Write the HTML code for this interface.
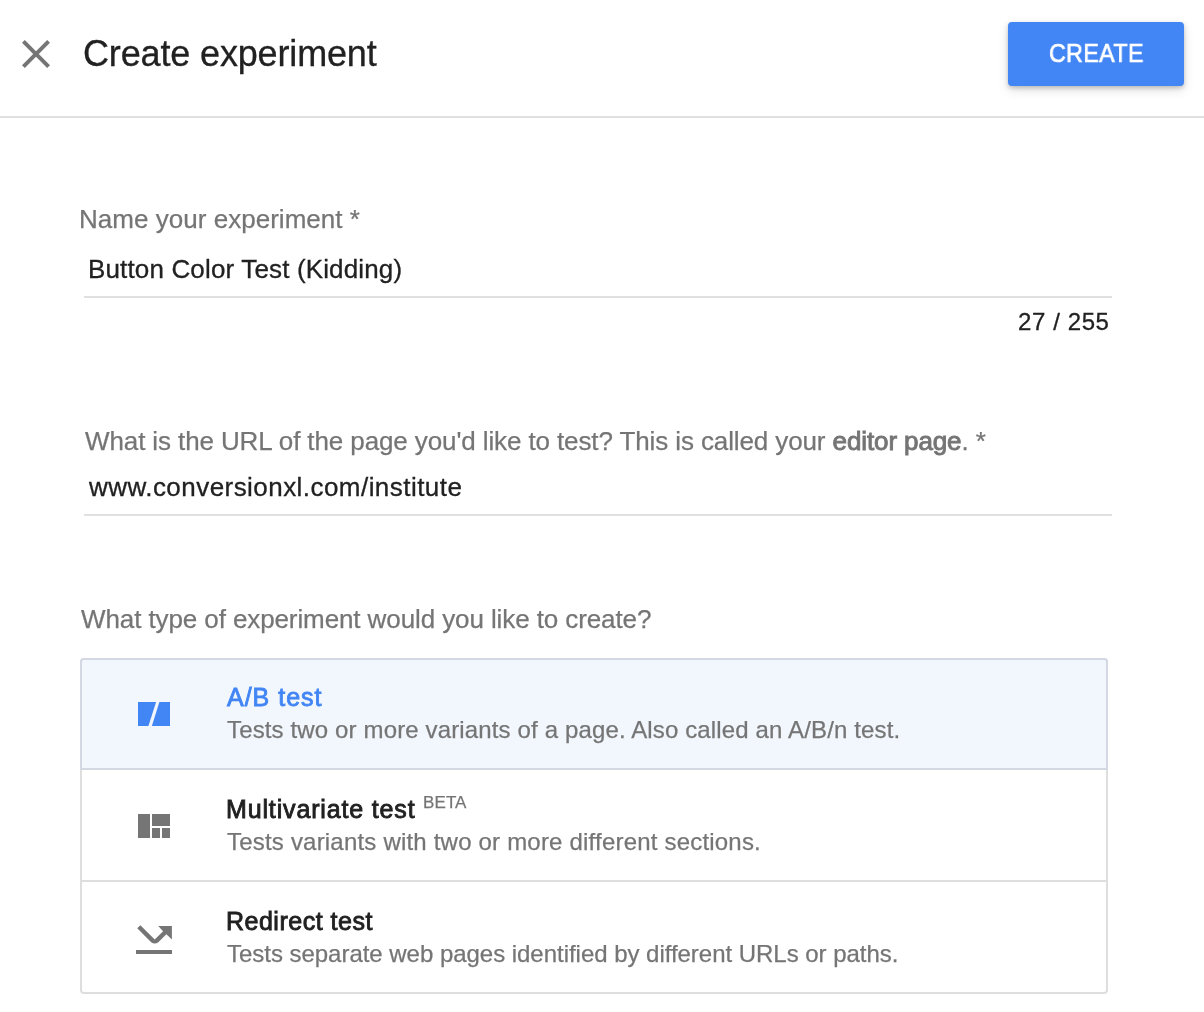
<!DOCTYPE html>
<html>
<head>
<meta charset="utf-8">
<style>
html,body{margin:0;padding:0;background:#fff;width:1204px;height:1012px;overflow:hidden;position:relative;}
body{font-family:"Liberation Sans",sans-serif;}
.t{position:absolute;white-space:pre;line-height:1;will-change:transform;}
.dark{color:#212121;-webkit-text-stroke:0.3px #212121;}
.gray{color:#757575;-webkit-text-stroke:0.25px #757575;}
.hdiv{position:absolute;left:0;top:116px;width:1204px;height:2px;background:#e0e0e0;}
.btn{position:absolute;left:1008px;top:22px;width:176px;height:64px;background:#4285f4;border-radius:4px;
 box-shadow:0 2px 4px rgba(0,0,0,.2),0 4px 12px rgba(0,0,0,.12);}
.uline{position:absolute;left:84px;width:1028px;height:2px;background:#e0e0e0;}
.card{position:absolute;left:80px;top:658px;width:1028px;height:336px;box-sizing:border-box;border:2px solid #dedede;border-radius:4px;}
.abrow{position:absolute;left:80px;top:658px;width:1028px;height:112px;box-sizing:border-box;border:2px solid #d3d8e2;border-radius:4px 4px 0 0;background:#f2f7fe;}
.cdiv{position:absolute;left:80px;width:1028px;height:2px;background:#dedede;}
svg{position:absolute;left:0;top:0;}
</style>
</head>
<body>
<!-- header -->
<svg width="1204" height="120" viewBox="0 0 1204 120">
  <g transform="translate(12,30) scale(2)" fill="#757575">
    <path d="M19 6.41L17.59 5 12 10.59 6.41 5 5 6.41 10.59 12 5 17.59 6.41 19 12 13.41 17.59 19 19 17.59 13.41 12z"/>
  </g>
</svg>
<div class="t dark" style="left:83.3px;top:35.5px;font-size:36px;letter-spacing:-0.15px;">Create experiment</div>
<div class="btn"></div>
<div class="t" style="left:1048.5px;top:39.6px;font-size:26.6px;color:#fff;-webkit-text-stroke:0.7px #fff;letter-spacing:0.4px;transform:scaleX(0.875);transform-origin:0 0;">CREATE</div>
<div class="hdiv"></div>

<!-- field 1 -->
<div class="t gray" style="left:79px;top:206px;font-size:26px;letter-spacing:0.03px;">Name your experiment *</div>
<div class="t dark" style="left:87.7px;top:256px;font-size:26px;letter-spacing:0.15px;">Button Color Test (Kidding)</div>
<div class="uline" style="top:296px;"></div>
<div class="t dark" style="left:1018px;top:309.5px;font-size:24px;letter-spacing:0.6px;">27 / 255</div>

<!-- field 2 -->
<div class="t gray" style="left:85px;top:427.5px;font-size:26px;letter-spacing:-0.11px;">What is the URL of the page you'd like to test? This is called your <span style="-webkit-text-stroke:0.9px #757575">editor page</span>. *</div>
<div class="t dark" style="left:89px;top:474px;font-size:26px;letter-spacing:0.45px;">www.conversionxl.com/institute</div>
<div class="uline" style="top:514px;"></div>

<!-- field 3 -->
<div class="t gray" style="left:81px;top:606px;font-size:26px;letter-spacing:-0.1px;">What type of experiment would you like to create?</div>

<div class="card"></div>
<div class="abrow"></div>
<div class="cdiv" style="top:880px;"></div>

<svg width="1204" height="1012" viewBox="0 0 1204 1012">
  <!-- AB icon -->
  <path d="M138 702H156.1L148.4 726H138Z" fill="#4285f4"/>
  <path d="M159.4 702H170V726H151.9Z" fill="#4285f4"/>
  <!-- MV icon -->
  <g fill="#757575">
    <rect x="138" y="814" width="12" height="24"/>
    <rect x="152" y="814" width="18" height="12"/>
    <rect x="152" y="828" width="8" height="10"/>
    <rect x="162" y="828" width="8" height="10"/>
  </g>
  <!-- redirect icon -->
  <g fill="#757575">
    <rect x="136" y="950" width="36" height="4"/>
    <path d="M137.25 928.25L140.35 925.15L154.75 939.55L163.1 931.2L158.2 926.1H171.9V939.6L166.36 934.14L158.3 942.2Q154.75 945 151.2 942.2Z"/>
  </g>
</svg>

<div class="t" style="left:227px;top:684.5px;font-size:25px;color:#4285f4;-webkit-text-stroke:0.85px #4285f4;letter-spacing:1.0px;">A/B test</div>
<div class="t gray" style="left:227px;top:718px;font-size:24px;letter-spacing:0.14px;">Tests two or more variants of a page. Also called an A/B/n test.</div>

<div class="t dark" style="left:226px;top:796.7px;font-size:25px;-webkit-text-stroke:0.85px #212121;letter-spacing:0.85px;">Multivariate test</div>
<div class="t gray" style="left:423px;top:793.6px;font-size:17px;letter-spacing:0.1px;-webkit-text-stroke:0.25px #757575;">BETA</div>
<div class="t gray" style="left:227px;top:830px;font-size:24px;letter-spacing:0.2px;">Tests variants with two or more different sections.</div>

<div class="t dark" style="left:226px;top:909.1px;font-size:25px;-webkit-text-stroke:0.85px #212121;letter-spacing:0.5px;">Redirect test</div>
<div class="t gray" style="left:227px;top:942px;font-size:24px;letter-spacing:-0.03px;">Tests separate web pages identified by different URLs or paths.</div>
</body>
</html>
